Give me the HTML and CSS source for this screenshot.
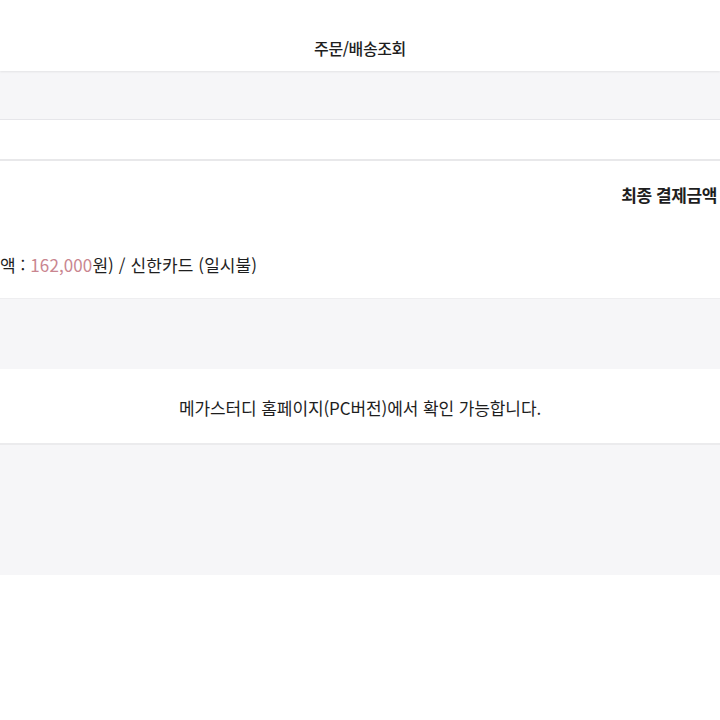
FILE: index.html
```html
<!DOCTYPE html>
<html lang="ko">
<head>
<meta charset="utf-8">
<title>주문/배송조회</title>
<link rel="stylesheet" href="styles.css">
</head>
<body>
<header class="topbar">
  <h1 class="title">주문/배송조회</h1>
</header>
<div class="band band-top"></div>
<div class="row-blank"></div>
<section class="pay">
  <div class="pay-head">최종 결제금액</div>
  <div class="pay-detail">액 : <span class="amount">162,000</span>원) / 신한카드 (일시불)</div>
</section>
<div class="band band-mid"></div>
<div class="notice">메가스터디 홈페이지(PC버전)에서 확인 가능합니다.</div>
<div class="band band-bottom"></div>
</body>
</html>
```
FILE: styles.css
```css
* { box-sizing: border-box; }
html, body { margin: 0; padding: 0; background: #fff; }
body {
  font-family: "Noto Sans CJK KR", "Noto Sans", sans-serif;
  color: #1e1e1e;
  overflow: hidden;
}
.topbar {
  height: 71px;
  display: flex;
  align-items: center;
  justify-content: center;
  padding-top: 24px;
  box-shadow: 0 1px 2px rgba(0,0,0,0.08);
  position: relative;
  z-index: 1;
}
.title {
  margin: 0;
  font-size: 16px;
  font-weight: 500;
  letter-spacing: -0.4px;
}
.band { background: #f6f6f8; }
.band-top {
  height: 49px;
  border-bottom: 1px solid #e6e6ea;
}
.row-blank {
  height: 41px;
  border-bottom: 2px solid #e8e8ea;
}
.pay {
  height: 137px;
  display: flex;
  flex-direction: column;
  padding-top: 22px;
}
.pay-head {
  text-align: right;
  font-size: 17px;
  font-weight: 700;
  letter-spacing: -0.4px;
  padding-right: 3px;
  line-height: 24px;
}
.pay-detail {
  margin-top: 46px;
  font-size: 17px;
  line-height: 24px;
  letter-spacing: 0.1px;
}
.amount { color: #c98690; }
.band-mid {
  height: 71px;
  border-top: 1px solid #eeeef0;
}
.notice {
  height: 76px;
  display: flex;
  align-items: center;
  justify-content: center;
  padding-top: 2px;
  font-size: 17px;
  letter-spacing: -0.1px;
  border-bottom: 2px solid #ebebed;
}
.band-bottom {
  height: 130px;
  box-shadow: 0 2px 3px rgba(0,0,0,0.02);
}
```
